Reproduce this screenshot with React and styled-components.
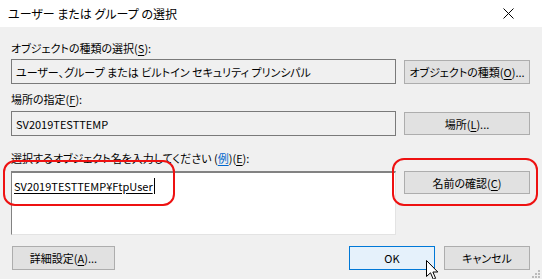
import styled, { createGlobalStyle } from "styled-components"

const Global = createGlobalStyle`
    html, body {
        margin: 0;
        padding: 0;
        background: #f0f0f0;
    }
    body {
        font-family: "Noto Sans CJK JP", "Noto Sans", sans-serif;
        font-size: 11px;
        color: #000000;
    }
`

export default function App() {
    return (
        <>
            <Global />
            <Dialog>
                <TitleBar>
                    <Title>ユーザー または グループ の選択</Title>
                    <svg width="11" height="11" viewBox="0 0 11 11">
                        <path d="M0.5 0.5 L10.5 10.5 M10.5 0.5 L0.5 10.5" stroke="#000" strokeWidth="1" />
                    </svg>
                </TitleBar>
                <Body>
                    <Label $top={13}>オブジェクトの種類の選択(<u>S</u>):</Label>
                    <FieldRow $top={3}>
                        <ReadOnlyBox>ユーザー、グループ または ビルトイン セキュリティ プリンシパル</ReadOnlyBox>
                        <Button $top={1}>オブジェクトの種類(<u>O</u>)...</Button>
                    </FieldRow>

                    <Label $top={7}>場所の指定(<u>F</u>):</Label>
                    <FieldRow $top={4}>
                        <ReadOnlyBox>SV2019TESTTEMP</ReadOnlyBox>
                        <Button $top={1} $h={23}>場所(<u>L</u>)...</Button>
                    </FieldRow>

                    <Label $top={14}>選択するオブジェクト名を入力してください (<Link>例</Link>)(<u>E</u>):</Label>
                    <FieldRow $top={5}>
                        <NameArea>
                            <NameText>SV2019TESTTEMP¥FtpUser</NameText>
                            <Caret />
                        </NameArea>
                        <Button $h={23}>名前の確認(<u>C</u>)</Button>
                    </FieldRow>

                    <Footer>
                        <Button $w={103}>詳細設定(<u>A</u>)...</Button>
                        <ButtonGroup>
                            <Button $w={86} $primary>OK</Button>
                            <Button $w={86}>キャンセル</Button>
                        </ButtonGroup>
                    </Footer>
                </Body>

                <Highlight style={{ left: 3, top: 160, width: 172, height: 46 }} />
                <Highlight style={{ left: 392, top: 158, width: 146, height: 48 }} />

                <Pointer width="13" height="21" viewBox="0 0 13 21">
                    <path d="M0.5 0.5 L0.5 16.5 L4.5 12.8 L7.3 19.3 L9.6 18.3 L6.9 12 L11.8 12 Z"
                        fill="#ffffff" stroke="#000000" strokeWidth="1" strokeLinejoin="miter" />
                </Pointer>

                <Grip>
                    <Dot style={{ left: 6, top: 0 }} />
                    <Dot style={{ left: 3, top: 3 }} />
                    <Dot style={{ left: 6, top: 3 }} />
                    <Dot style={{ left: 0, top: 6 }} />
                    <Dot style={{ left: 3, top: 6 }} />
                    <Dot style={{ left: 6, top: 6 }} />
                </Grip>
            </Dialog>
        </>
    )
}

const Dialog = styled.div`
    position: relative;
    width: 542px;
    height: 279px;
    overflow: hidden;
    background: #f0f0f0;
`

const TitleBar = styled.div`
    height: 27px;
    background: #ffffff;
    display: flex;
    align-items: center;
    justify-content: space-between;
    padding: 0 28px 0 8px;
    box-sizing: border-box;
`

const Title = styled.div`
    font-size: 12px;
    line-height: 16px;
    font-feature-settings: "palt";
`

const Body = styled.div`
    padding: 0 12px 0 11px;
`

const Label = styled.div`
    margin-top: ${p => p.$top}px;
    height: 16px;
    line-height: 16px;
    font-size: 11px;
    font-feature-settings: "palt";
    u { text-decoration-thickness: 1px; text-underline-offset: 2px; }
`

const Link = styled.span`
    color: #0066cc;
    text-decoration: underline;
    text-underline-offset: 2px;
`

const FieldRow = styled.div`
    margin-top: ${p => p.$top}px;
    display: grid;
    grid-template-columns: 385px 126px;
    column-gap: 8px;
    align-items: start;
`

const ReadOnlyBox = styled.div`
    height: 25px;
    box-sizing: border-box;
    border: 1px solid #7a7a7a;
    background: #f0f0f0;
    padding: 0 4px;
    display: flex;
    align-items: center;
    font-size: 11px;
    font-feature-settings: "palt";
    white-space: nowrap;
    overflow: hidden;
`

const NameArea = styled.div`
    height: 64px;
    box-sizing: border-box;
    background: #ffffff;
    border-top: 2px solid #828282;
    border-left: 1px solid #828282;
    border-right: 1px solid #e3e3e3;
    border-bottom: 1px solid #e3e3e3;
    padding: 5px 2px 0;
    display: flex;
    align-items: flex-start;
`

const NameText = styled.span`
    font-size: 11px;
    line-height: 16px;
    text-decoration: underline;
    text-underline-offset: 2px;
`

const Caret = styled.span`
    display: inline-block;
    width: 1px;
    height: 16px;
    margin-left: 1px;
    background: #000000;
`

const Button = styled.div`
    margin-top: ${p => p.$top || 0}px;
    height: ${p => p.$h || 24}px;
    width: ${p => (p.$w ? p.$w + "px" : "auto")};
    box-sizing: border-box;
    border: 1px solid ${p => (p.$primary ? "#0078d7" : "#adadad")};
    background: ${p => (p.$primary ? "#e5f1fb" : "#e1e1e1")};
    display: flex;
    align-items: center;
    justify-content: center;
    font-size: 11px;
    font-feature-settings: "palt";
    white-space: nowrap;
    u { text-underline-offset: 2px; }
`

const Footer = styled.div`
    margin-top: 11px;
    padding-left: 1px;
    display: flex;
    justify-content: space-between;
`

const ButtonGroup = styled.div`
    display: flex;
    gap: 9px;
`

const Highlight = styled.div`
    position: absolute;
    box-sizing: border-box;
    border: 2px solid #ee1111;
    border-radius: 12px;
    pointer-events: none;
`

const Pointer = styled.svg`
    position: absolute;
    left: 426px;
    top: 260px;
`

const Grip = styled.div`
    position: absolute;
    left: 532px;
    top: 270px;
    width: 8px;
    height: 8px;
`

const Dot = styled.span`
    position: absolute;
    width: 2px;
    height: 2px;
    background: #bcbcbc;
`
